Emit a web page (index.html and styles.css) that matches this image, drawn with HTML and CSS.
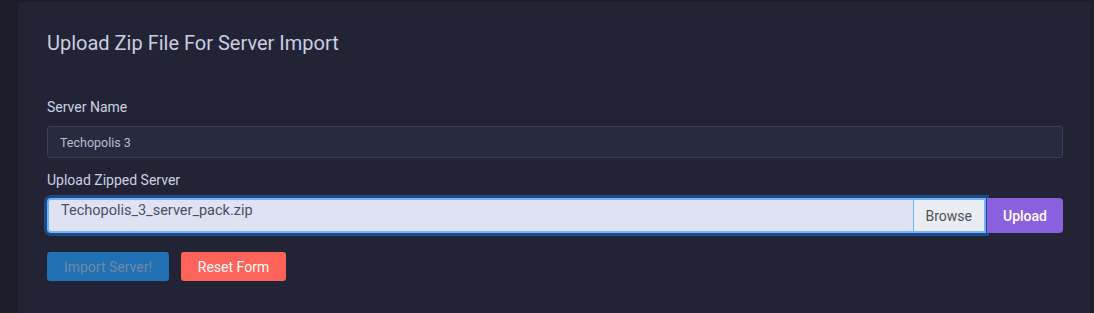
FILE: index.html
```html
<!DOCTYPE html>
<html lang="en">
<head>
    <meta charset="UTF-8">
    <meta name="viewport" content="width=device-width, initial-scale=1.0">
    <title>Upload Zip File For Server Import</title>
    <link rel="stylesheet" href="styles.css">
</head>
<body>
    <div class="sidebar"></div>
    <div class="card">
        <h5 class="card-title">Upload Zip File For Server Import</h5>

        <!-- Server name -->
        <div class="form-group first">
            <label class="form-label">Server Name</label>
            <input class="form-control" type="text" value="Techopolis 3">
        </div>

        <!-- Zip upload -->
        <div class="form-group">
            <label class="form-label">Upload Zipped Server</label>
            <div class="input-group">
                <div class="custom-file">
                    <span class="file-name">Techopolis_3_server_pack.zip</span>
                    <span class="file-browse">Browse</span>
                </div>
                <button class="btn btn-upload">Upload</button>
            </div>
        </div>

        <div class="actions">
            <button class="btn btn-import" disabled>Import Server!</button>
            <button class="btn btn-reset">Reset Form</button>
        </div>
    </div>
</body>
</html>
```

FILE: styles.css
```css
body {
    margin: 0;
    padding: 0;
    height: 313px;
    overflow: hidden;
    background-color: #1c1d2b;
    font-family: Roboto, "Liberation Sans", sans-serif;
    display: flex;
}
.sidebar {
    width: 18px;
    flex-shrink: 0;
}
.card {
    flex: 1;
    margin-top: 2px;
    margin-right: 4px;
    padding: 29px 27px 0 29px;
    background-color: #222436;
}
.card-title {
    margin: 0;
    font-size: 20px;
    font-weight: 400;
    line-height: 24px;
    color: #c9cee2;
}
.form-group {
    margin-top: 12px;
}
.form-group.first {
    margin-top: 42px;
}
.form-label {
    display: block;
    font-size: 14px;
    line-height: 21px;
    color: #ccd1e4;
    margin-bottom: 8px;
}
.form-control {
    display: block;
    box-sizing: border-box;
    width: 100%;
    height: 32px;
    margin: 0;
    padding: 0 12px;
    font-family: inherit;
    font-size: 12.5px;
    color: #b9bdd3;
    background-color: #282a3f;
    border: 1px solid #3a3d5c;
    border-radius: 3px;
    outline: none;
}
.input-group {
    display: flex;
    height: 35px;
    margin-top: -1px;
}
.custom-file {
    flex: 1;
    display: flex;
    border: 2px solid #74b3f7;
    border-radius: 4px 0 0 4px;
    box-shadow: 0 0 0 3px #1d4a86;
    background-color: #dfe2f3;
    overflow: hidden;
}
.file-name {
    flex: 1;
    padding: 2px 12px 0;
    font-size: 14.5px;
    color: #4a4f62;
}
.file-browse {
    display: flex;
    align-items: center;
    padding: 0 12px;
    font-size: 14px;
    color: #4b5160;
    background-color: #e9ecf0;
    border-left: 1px solid #74b3f7;
}
.btn {
    font-family: inherit;
    font-size: 14px;
    border: none;
    border-radius: 3px;
    cursor: pointer;
}
.btn-upload {
    width: 76px;
    margin-left: 1px;
    font-weight: 500;
    color: #fff;
    background-color: #8b60e0;
    border-radius: 0 4px 4px 0;
}
.actions {
    display: flex;
    gap: 12px;
    margin-top: 19px;
}
.actions .btn {
    height: 29px;
    padding: 0 16px;
}
.btn-import {
    width: 122px;
    color: #7288a6;
    background-color: #2170b4;
}
.btn-reset {
    width: 105px;
    color: #fff;
    background-color: #fe6359;
}
```
